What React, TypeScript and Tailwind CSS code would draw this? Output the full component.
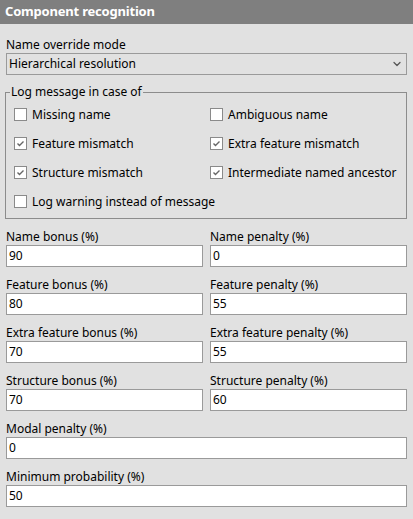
import { ChevronDown } from "lucide-react";

const font = { fontFamily: '"Noto Sans", "Open Sans", Arial, sans-serif' };

function Check({ label, checked, wide }: { label: string; checked?: boolean; wide?: boolean }) {
  return (
    <div className={`flex h-[29px] items-center gap-[5px] whitespace-nowrap text-[12px] text-black ${wide ? "col-span-2" : ""}`}>
      <span className="flex h-[13px] w-[13px] shrink-0 items-center justify-center border border-[#8a8a8a] bg-white">
        {checked && (
          <svg width="9" height="9" viewBox="0 0 9 9">
            <path d="M1.5 4.5 L3.5 6.5 L7.5 2.5" fill="none" stroke="#666" strokeWidth="1.4" />
          </svg>
        )}
      </span>
      <span>{label}</span>
    </div>
  );
}

function Field({ label, value }: { label: string; value: string }) {
  return (
    <div className="flex flex-col">
      <div className="h-4 text-[12px] leading-4 text-black">{label}</div>
      <div className="flex h-[22px] items-center border border-[#9a9a9a] bg-white pl-[2px] text-[12px] text-black">
        {value}
      </div>
    </div>
  );
}

export default function App() {
  return (
    <div className="h-[519px] w-[413px] bg-[#e1e1e1]" style={font}>
      <div className="flex h-6 items-center bg-[#7f7f7f] pl-[5px] text-[13px] font-bold tracking-[-0.2px] text-white">
        Component recognition
      </div>
      <div className="flex flex-col px-[6px] pt-[13px]">
        <div className="h-4 text-[12px] leading-4 text-black">Name override mode</div>
        <div className="flex h-[22px] items-center justify-between border border-[#9a9a9a] bg-[#e1e1e1] pl-[2px] pr-[3px] text-[12px] text-black">
          <span>Hierarchical resolution</span>
          <ChevronDown size={12} strokeWidth={2.5} className="text-[#555]" />
        </div>

        <div className="relative -ml-px mt-[17px] border border-[#8c8c8c] pt-[7px] pb-[2px] pl-[8px]">
          <span className="absolute -top-[9px] left-[4px] bg-[#e1e1e1] px-px text-[12px] leading-4 text-black">
            Log message in case of
          </span>
          <div className="grid grid-cols-2">
            <Check label="Missing name" />
            <Check label="Ambiguous name" />
            <Check label="Feature mismatch" checked />
            <Check label="Extra feature mismatch" checked />
            <Check label="Structure mismatch" checked />
            <Check label="Intermediate named ancestor" checked />
            <Check label="Log warning instead of message" wide />
          </div>
        </div>

        <div className="mt-[10px] grid grid-cols-2 gap-x-[7px] gap-y-[10px]">
          <Field label="Name bonus (%)" value="90" />
          <Field label="Name penalty (%)" value="0" />
          <Field label="Feature bonus (%)" value="80" />
          <Field label="Feature penalty (%)" value="55" />
          <Field label="Extra feature bonus (%)" value="70" />
          <Field label="Extra feature penalty (%)" value="55" />
          <Field label="Structure bonus (%)" value="70" />
          <Field label="Structure penalty (%)" value="60" />
        </div>
        <div className="mt-[10px] flex flex-col gap-[10px]">
          <Field label="Modal penalty (%)" value="0" />
          <Field label="Minimum probability (%)" value="50" />
        </div>
      </div>
    </div>
  );
}
